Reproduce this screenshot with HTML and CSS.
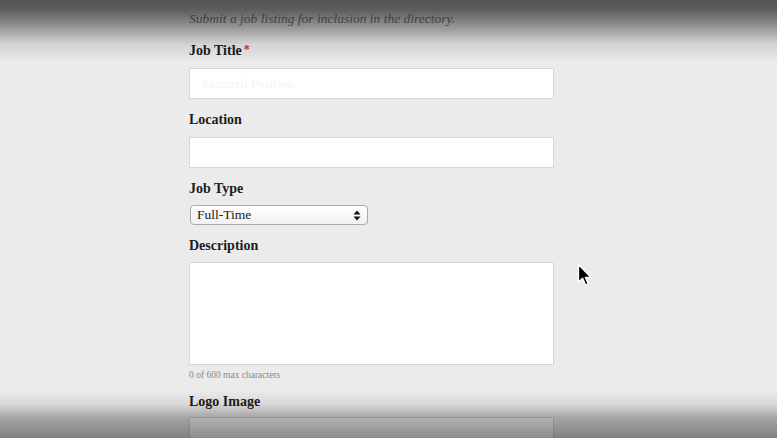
FILE: index.html
```html
<!DOCTYPE html>
<html>
<head>
<meta charset="utf-8">
<link rel="stylesheet" href="styles.css">
</head>
<body>
<div class="page">
  <form class="form">
    <p class="intro">Submit a job listing for inclusion in the directory.</p>
    <div class="field">
      <label class="label">Job Title<span class="req">*</span></label>
      <input class="text" type="text" placeholder="Featured Position">
    </div>
    <div class="field">
      <label class="label">Location</label>
      <input class="text" type="text">
    </div>
    <div class="field field-select">
      <label class="label">Job Type</label>
      <div class="select">
        <span>Full-Time</span>
        <svg class="arrows" width="8" height="11" viewBox="0 0 8 11"><path d="M4 0.5 L7.5 4.5 L0.5 4.5 Z M4 10.5 L7.5 6.5 L0.5 6.5 Z" fill="#111"/></svg>
      </div>
    </div>
    <div class="field field-desc">
      <label class="label">Description</label>
      <div class="area"></div>
      <div class="count">0 of 600 max characters</div>
    </div>
    <div class="field field-logo">
      <label class="label">Logo Image</label>
      <div class="text file"></div>
    </div>
  </form>
</div>
<svg class="cursor" width="16" height="26" viewBox="0 0 16 26"><path d="M1.5 1.5 L1.5 19 L5.6 15.2 L8.6 22 L11.2 20.9 L8.3 14.3 L13.8 14.3 Z" fill="#000" stroke="#fff" stroke-width="1.3" stroke-linejoin="round"/></svg>
<div class="shade-top"></div>
<div class="shade-bottom"></div>
</body>
</html>
```

FILE: styles.css
```css
html, body {
  margin: 0;
  padding: 0;
  background: #ebebeb;
  height: 100%;
  overflow: hidden;
}
body {
  font-family: "Liberation Serif", "DejaVu Serif", serif;
  color: #1e1e1e;
}
.page {
  padding-left: 189px;
}
.form {
  width: 365px;
  display: flex;
  flex-direction: column;
}
.intro {
  margin: 9px 0 0;
  height: 21px;
  line-height: 20px;
  font-size: 13.5px;
  font-style: italic;
  color: #7a7a7a;
}
.field {
  display: flex;
  flex-direction: column;
  margin-top: 10px;
}
.label {
  display: block;
  font-weight: bold;
  font-size: 14px;
  line-height: 20px;
  padding-top: 1px;
  margin-bottom: 7px;
  color: #1c1c1c;
}
.req {
  color: #b04040;
  font-size: 12px;
  margin-left: 2px;
  position: relative;
  top: -2px;
}
.text {
  box-sizing: border-box;
  width: 365px;
  height: 31px;
  margin: 0;
  border: 1px solid #d6d6d6;
  background: #fff;
  font-family: inherit;
  font-size: 13px;
  padding: 0 12px;
  outline: none;
}
.text::placeholder {
  color: #f4f4f4;
}
.field-select .label {
  margin-bottom: 6px;
}
.select {
  box-sizing: border-box;
  width: 178px;
  height: 20px;
  margin-left: 1px;
  border: 1px solid #a9a9a9;
  border-radius: 4px;
  background: linear-gradient(#ffffff, #f1f1f1);
  display: flex;
  align-items: center;
  justify-content: space-between;
  padding: 0 6px 0 6px;
  font-size: 13.5px;
  color: #1a1a1a;
}
.arrows {
  display: block;
}
.field-desc .label {
  margin-bottom: 6px;
}
.area {
  box-sizing: border-box;
  width: 365px;
  height: 103px;
  border: 1px solid #d6d6d6;
  background: #fff;
}
.count {
  font-size: 9.5px;
  line-height: 12px;
  margin-top: 4px;
  color: #8a8a8a;
}
.field-logo {
  margin-top: 11px;
}
.field-logo .label {
  padding-top: 0;
  margin-bottom: 5px;
}
.file {
  height: 31px;
}
.cursor {
  position: absolute;
  left: 577px;
  top: 263px;
}
.shade-top {
  position: fixed;
  left: 0;
  right: 0;
  top: 0;
  height: 62px;
  background: linear-gradient(rgba(0,0,0,0.64) 0px, rgba(0,0,0,0.6) 10px, rgba(0,0,0,0.38) 26px, rgba(0,0,0,0.1) 44px, rgba(0,0,0,0) 62px);
  pointer-events: none;
}
.shade-bottom {
  position: fixed;
  left: 0;
  right: 0;
  bottom: 0;
  height: 48px;
  background: linear-gradient(rgba(0,0,0,0) 0px, rgba(0,0,0,0.08) 14px, rgba(0,0,0,0.3) 28px, rgba(0,0,0,0.45) 48px);
  pointer-events: none;
}
```
